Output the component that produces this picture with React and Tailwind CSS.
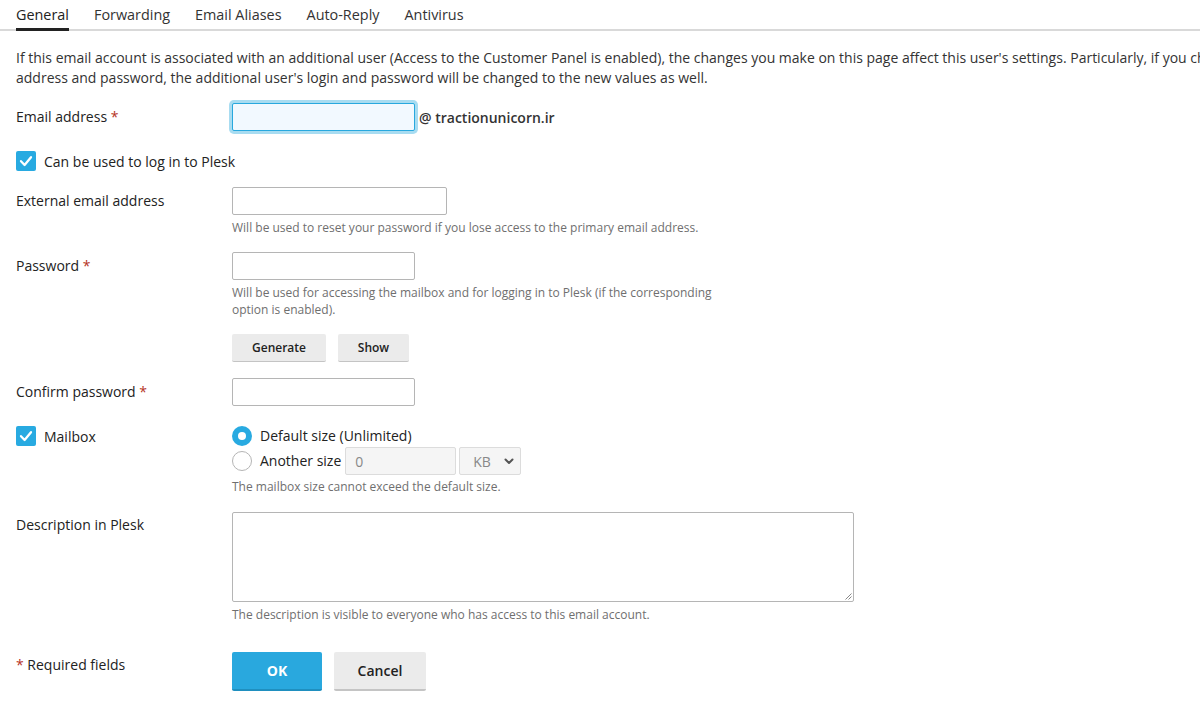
import React from "react";

const font = { fontFamily: '"Open Sans", "Noto Sans", sans-serif' };

function Check() {
  return (
    <span className="flex h-5 w-5 shrink-0 items-center justify-center rounded-[2px] bg-[#28aae1]">
      <svg viewBox="0 0 20 20" className="h-5 w-5" fill="none" stroke="white" strokeWidth="2.3" strokeLinecap="round" strokeLinejoin="round">
        <path d="M5 10.2 8.6 14 15 6.2" />
      </svg>
    </span>
  );
}

function Star() {
  return <span className="text-[#b5331f]"> *</span>;
}

function Hint({ children, className = "" }) {
  return <div className={"text-[12px] leading-[17px] text-[#6f6f6f] " + className}>{children}</div>;
}

const inputCls = "h-[28px] rounded-[2px] border border-[#b5b5b5] bg-white";

export default function App() {
  return (
    <div style={font} className="min-h-[720px] w-[1200px] overflow-hidden bg-white text-[14px] text-[#222]">
      {/* tabs */}
      <div className="flex h-[31px] items-end border-b-2 border-[#d9d9d9] pl-4">
        {["General", "Forwarding", "Email Aliases", "Auto-Reply", "Antivirus"].map((t, i) => (
          <div
            key={t}
            className={
              "mr-[25px] -mb-[2px] pb-[3px] text-[14.4px] leading-[20px] " +
              (i === 0 ? "border-b-[3px] border-[#222] text-[#222]" : "border-b-[3px] border-transparent text-[#333]")
            }
          >
            {t}
          </div>
        ))}
      </div>

      <div className="mt-[17px] overflow-hidden pl-4 text-[14px] leading-[20px] text-[#333]">
        <div className="whitespace-nowrap">
          If this email account is associated with an additional user (Access to the Customer Panel is enabled), the changes you make on this page affect this user's settings. Particularly, if you change the email
        </div>
        <div className="whitespace-nowrap">
          address and password, the additional user's login and password will be changed to the new values as well.
        </div>
      </div>

      <div className="pl-4">
        {/* Email */}
        <div className="mt-[15px] flex">
          <div className="w-[216px] pt-1 leading-5">
            Email address<Star />
          </div>
          <div className="flex items-center">
            <div className="h-[28px] w-[183px] rounded-[2px] border border-[#28a8de] bg-[#f2f9ff] shadow-[0_0_0_3px_#a8dcf1]" />
            <span className="ml-1 font-semibold text-[#333]">@ tractionunicorn.ir</span>
          </div>
        </div>

        {/* login */}
        <div className="mt-5 flex items-start">
          <Check />
          <span className="ml-2 pt-[1px] leading-5">Can be used to log in to Plesk</span>
        </div>

        {/* external */}
        <div className="mt-[15px] flex">
          <div className="w-[216px] pt-1 leading-5">External email address</div>
          <div>
            <div className={inputCls + " w-[215px]"} />
            <Hint className="mt-[4px]">Will be used to reset your password if you lose access to the primary email address.</Hint>
          </div>
        </div>

        {/* password */}
        <div className="mt-4 flex">
          <div className="w-[216px] pt-1 leading-5">
            Password<Star />
          </div>
          <div>
            <div className={inputCls + " w-[183px]"} />
            <Hint className="mt-[4px] w-[490px]">
              Will be used for accessing the mailbox and for logging in to Plesk (if the corresponding option is enabled).
            </Hint>
            <div className="mt-4 flex gap-3">
              <button className="h-[28px] w-[94px] rounded-[2px] border-b border-[#c4c4c4] bg-[#ebebeb] text-[12px] font-semibold text-[#222]">
                Generate
              </button>
              <button className="h-[28px] w-[71px] rounded-[2px] border-b border-[#c4c4c4] bg-[#ebebeb] text-[12px] font-semibold text-[#222]">
                Show
              </button>
            </div>
          </div>
        </div>

        {/* confirm */}
        <div className="mt-4 flex">
          <div className="w-[216px] pt-1 leading-5">
            Confirm password<Star />
          </div>
          <div className={inputCls + " w-[183px]"} />
        </div>

        {/* mailbox */}
        <div className="mt-5 flex">
          <div className="flex w-[216px] items-start">
            <Check />
            <span className="ml-2 pt-[1px] leading-5">Mailbox</span>
          </div>
          <div>
            <div className="flex h-[21px] items-start">
              <span className="flex h-5 w-5 items-center justify-center rounded-full bg-[#28aae1]">
                <span className="h-[8px] w-[8px] rounded-full bg-white" />
              </span>
              <span className="ml-2 leading-5">Default size (Unlimited)</span>
            </div>
            <div className="flex h-[28px] items-center">
              <span className="h-5 w-5 rounded-full border border-[#b5b5b5] bg-white" />
              <span className="ml-2 leading-5">Another size</span>
              <div className="ml-[4px] flex h-[28px] w-[111px] items-center rounded-[2px] border border-[#dcdcdc] bg-[#f5f5f5] pl-[9px] text-[#888]">
                0
              </div>
              <div className="ml-[3px] flex h-[28px] w-[62px] items-center justify-between rounded-[2px] border border-[#dcdcdc] bg-[#f5f5f5] pl-[13px] pr-[5px] text-[#888]">
                <span>KB</span>
                <svg viewBox="0 0 12 12" className="h-3 w-3" fill="none" stroke="#555" strokeWidth="2" strokeLinecap="round" strokeLinejoin="round">
                  <path d="M2.5 4.5 6 8l3.5-3.5" />
                </svg>
              </div>
            </div>
            <Hint className="mt-[3px]">The mailbox size cannot exceed the default size.</Hint>
          </div>
        </div>

        {/* description */}
        <div className="mt-[17px] flex">
          <div className="w-[216px] pt-[3px] leading-5">Description in Plesk</div>
          <div>
            <div className="relative h-[90px] w-[622px] rounded-[2px] border border-[#b5b5b5] bg-white">
              <svg viewBox="0 0 8 8" className="absolute bottom-[1px] right-[1px] h-2 w-2" stroke="#888" strokeWidth="1">
                <path d="M7.5 1.5 1.5 7.5M7.5 4.5 4.5 7.5" />
              </svg>
            </div>
            <Hint className="mt-[4px]">The description is visible to everyone who has access to this email account.</Hint>
          </div>
        </div>

        {/* footer */}
        <div className="mt-[29px] flex">
          <div className="w-[216px] pt-[3px] leading-5">
            <span className="text-[#b5331f]">*</span> Required fields
          </div>
          <div className="flex gap-3">
            <button className="h-[39px] w-[90px] rounded-[2px] border-b-2 border-[#1f8fbf] bg-[#29a8de] text-[14px] font-bold text-white">
              OK
            </button>
            <button className="h-[39px] w-[92px] rounded-[2px] border-b-2 border-[#c4c4c4] bg-[#ebebeb] text-[14px] font-semibold text-[#222]">
              Cancel
            </button>
          </div>
        </div>
      </div>
    </div>
  );
}
